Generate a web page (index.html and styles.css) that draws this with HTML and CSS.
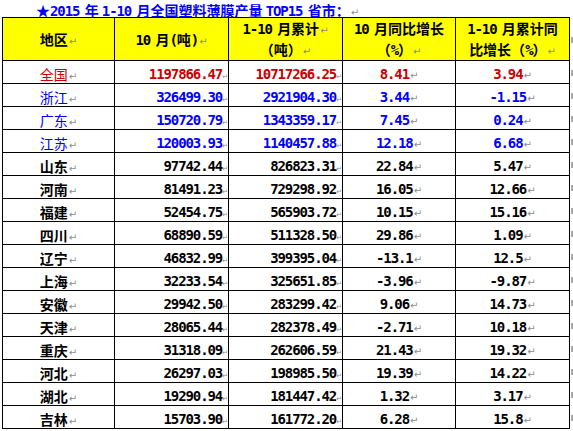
FILE: index.html
```html
<!DOCTYPE html>
<html lang="zh-CN">
<head>
<meta charset="utf-8">
<title>2015年1-10月全国塑料薄膜产量TOP15省市</title>
<link rel="stylesheet" href="styles.css">
</head>
<body>
<div class="title">★<span class="n">2015 </span>年 <span class="n">1-10 </span>月全国塑料薄膜产量 <span class="n">TOP15 </span>省市：<span class="p">↵</span></div>
<table class="grid">
  <colgroup>
    <col class="c1"><col class="c2"><col class="c3"><col class="c4"><col class="c5"><col class="c6">
  </colgroup>
  <thead>
    <tr>
      <th>地区<span class="p">↵</span></th>
      <th><span class="n">10 </span>月<span class="n">(</span>吨<span class="n">)</span><span class="p">↵</span></th>
      <th><span class="n">1-10 </span>月累计<span class="p">↵</span><br>（吨）<span class="p">↵</span></th>
      <th><span class="n">10 </span>月同比增长<br>（<span class="n">%</span>）<span class="p">↵</span></th>
      <th><span class="n">1-10 </span>月累计同<br>比增长（<span class="n">%</span>）<span class="p">↵</span></th>
      <td class="eor"><span class="m"></span></td>
    </tr>
  </thead>
  <tbody>
    <tr class="red"><td class="name">全国<span class="p">↵</span></td><td class="num">1197866.47<span class="pc">↵</span></td><td class="num">10717266.25<span class="pc">↵</span></td><td class="pct">8.41<span class="p">↵</span></td><td class="pct">3.94<span class="p">↵</span></td><td class="eor"><span class="m"></span></td></tr>
    <tr class="blue"><td class="name">浙江<span class="p">↵</span></td><td class="num">326499.30<span class="pc">↵</span></td><td class="num">2921904.30<span class="pc">↵</span></td><td class="pct">3.44<span class="p">↵</span></td><td class="pct">-1.15<span class="p">↵</span></td><td class="eor"><span class="m"></span></td></tr>
    <tr class="blue"><td class="name">广东<span class="p">↵</span></td><td class="num">150720.79<span class="pc">↵</span></td><td class="num">1343359.17<span class="pc">↵</span></td><td class="pct">7.45<span class="p">↵</span></td><td class="pct">0.24<span class="p">↵</span></td><td class="eor"><span class="m"></span></td></tr>
    <tr class="blue"><td class="name">江苏<span class="p">↵</span></td><td class="num">120003.93<span class="pc">↵</span></td><td class="num">1140457.88<span class="pc">↵</span></td><td class="pct">12.18<span class="p">↵</span></td><td class="pct">6.68<span class="p">↵</span></td><td class="eor"><span class="m"></span></td></tr>
    <tr><td class="name">山东<span class="p">↵</span></td><td class="num">97742.44<span class="pc">↵</span></td><td class="num">826823.31<span class="pc">↵</span></td><td class="pct">22.84<span class="p">↵</span></td><td class="pct">5.47<span class="p">↵</span></td><td class="eor"><span class="m"></span></td></tr>
    <tr><td class="name">河南<span class="p">↵</span></td><td class="num">81491.23<span class="pc">↵</span></td><td class="num">729298.92<span class="pc">↵</span></td><td class="pct">16.05<span class="p">↵</span></td><td class="pct">12.66<span class="p">↵</span></td><td class="eor"><span class="m"></span></td></tr>
    <tr><td class="name">福建<span class="p">↵</span></td><td class="num">52454.75<span class="pc">↵</span></td><td class="num">565903.72<span class="pc">↵</span></td><td class="pct">10.15<span class="p">↵</span></td><td class="pct">15.16<span class="p">↵</span></td><td class="eor"><span class="m"></span></td></tr>
    <tr><td class="name">四川<span class="p">↵</span></td><td class="num">68890.59<span class="pc">↵</span></td><td class="num">511328.50<span class="pc">↵</span></td><td class="pct">29.86<span class="p">↵</span></td><td class="pct">1.09<span class="p">↵</span></td><td class="eor"><span class="m"></span></td></tr>
    <tr><td class="name">辽宁<span class="p">↵</span></td><td class="num">46832.99<span class="pc">↵</span></td><td class="num">399395.04<span class="pc">↵</span></td><td class="pct">-13.1<span class="p">↵</span></td><td class="pct">12.5<span class="p">↵</span></td><td class="eor"><span class="m"></span></td></tr>
    <tr><td class="name">上海<span class="p">↵</span></td><td class="num">32233.54<span class="pc">↵</span></td><td class="num">325651.85<span class="pc">↵</span></td><td class="pct">-3.96<span class="p">↵</span></td><td class="pct">-9.87<span class="p">↵</span></td><td class="eor"><span class="m"></span></td></tr>
    <tr><td class="name">安徽<span class="p">↵</span></td><td class="num">29942.50<span class="pc">↵</span></td><td class="num">283299.42<span class="pc">↵</span></td><td class="pct">9.06<span class="p">↵</span></td><td class="pct">14.73<span class="p">↵</span></td><td class="eor"><span class="m"></span></td></tr>
    <tr><td class="name">天津<span class="p">↵</span></td><td class="num">28065.44<span class="pc">↵</span></td><td class="num">282378.49<span class="pc">↵</span></td><td class="pct">-2.71<span class="p">↵</span></td><td class="pct">10.18<span class="p">↵</span></td><td class="eor"><span class="m"></span></td></tr>
    <tr><td class="name">重庆<span class="p">↵</span></td><td class="num">31318.09<span class="pc">↵</span></td><td class="num">262606.59<span class="pc">↵</span></td><td class="pct">21.43<span class="p">↵</span></td><td class="pct">19.32<span class="p">↵</span></td><td class="eor"><span class="m"></span></td></tr>
    <tr><td class="name">河北<span class="p">↵</span></td><td class="num">26297.03<span class="pc">↵</span></td><td class="num">198985.50<span class="pc">↵</span></td><td class="pct">19.39<span class="p">↵</span></td><td class="pct">14.22<span class="p">↵</span></td><td class="eor"><span class="m"></span></td></tr>
    <tr><td class="name">湖北<span class="p">↵</span></td><td class="num">19290.94<span class="pc">↵</span></td><td class="num">181447.42<span class="pc">↵</span></td><td class="pct">1.32<span class="p">↵</span></td><td class="pct">3.17<span class="p">↵</span></td><td class="eor"><span class="m"></span></td></tr>
    <tr><td class="name">吉林<span class="p">↵</span></td><td class="num">15703.90<span class="pc">↵</span></td><td class="num">161772.20<span class="pc">↵</span></td><td class="pct">6.28<span class="p">↵</span></td><td class="pct">15.8<span class="p">↵</span></td><td class="eor"><span class="m"></span></td></tr>
  </tbody>
</table>
</body>
</html>
```

FILE: styles.css
```css
html, body {
  margin: 0;
  padding: 0;
  overflow: hidden;
  background: #ffffff;
}
body {
  font-family: "Noto Sans CJK SC", sans-serif;
  font-size: 14px;
  color: #000000;
}
.title {
  height: 20px;
  line-height: 20px;
  margin-bottom: -3px;
  padding-left: 36px;
  color: #0000ff;
  font-weight: bold;
  white-space: nowrap;
}
.n {
  font-family: "DejaVu Sans Mono", monospace;
  font-size: 14px;
  line-height: 14px;
  letter-spacing: -1.1px;
  word-spacing: -2px;
}
.p, .pc {
  font-family: "DejaVu Sans", sans-serif;
  font-weight: normal;
  color: #8c8c8c;
  letter-spacing: 0;
}
.p {
  font-size: 10px;
  line-height: 10px;
  margin-left: 1px;
}
.pc {
  font-size: 7px;
  line-height: 7px;
}
.grid {
  border-collapse: collapse;
  table-layout: fixed;
  width: 571px;
  margin-left: 2px;
}
.c1 { width: 112px; }
.c2 { width: 114px; }
.c3 { width: 114px; }
.c4 { width: 113px; }
.c5 { width: 114px; }
.c6 { width: 4px; }
.grid th, .grid td {
  border: 1px solid #000000;
  padding: 0;
  white-space: nowrap;
}
.grid th {
  background: #ffff00;
  height: 42px;
  line-height: 21px;
  font-weight: bold;
  text-align: center;
  vertical-align: middle;
}
.grid tbody td {
  height: 18px;
  padding-top: 4px;
  line-height: 18px;
  vertical-align: top;
  font-weight: bold;
}
.grid td.eor {
  border: none;
  padding: 0 0 0 1px;
  text-align: left;
  vertical-align: middle;
  line-height: 6px;
}
.m {
  display: inline-block;
  width: 2px;
  height: 6px;
  background: #a8a8a8;
  vertical-align: middle;
}
.name { text-align: center; }
.num, .pct {
  font-family: "DejaVu Sans Mono", monospace;
  font-size: 14px;
  letter-spacing: -1.1px;
}
.num { text-align: right; }
.pct { text-align: center; }
.red td { color: #cc0000; }
.blue td { color: #0000ff; }
.red td.name, .blue td.name { font-weight: normal; }
.grid td .p, .grid td .pc { color: #8c8c8c; }
```
